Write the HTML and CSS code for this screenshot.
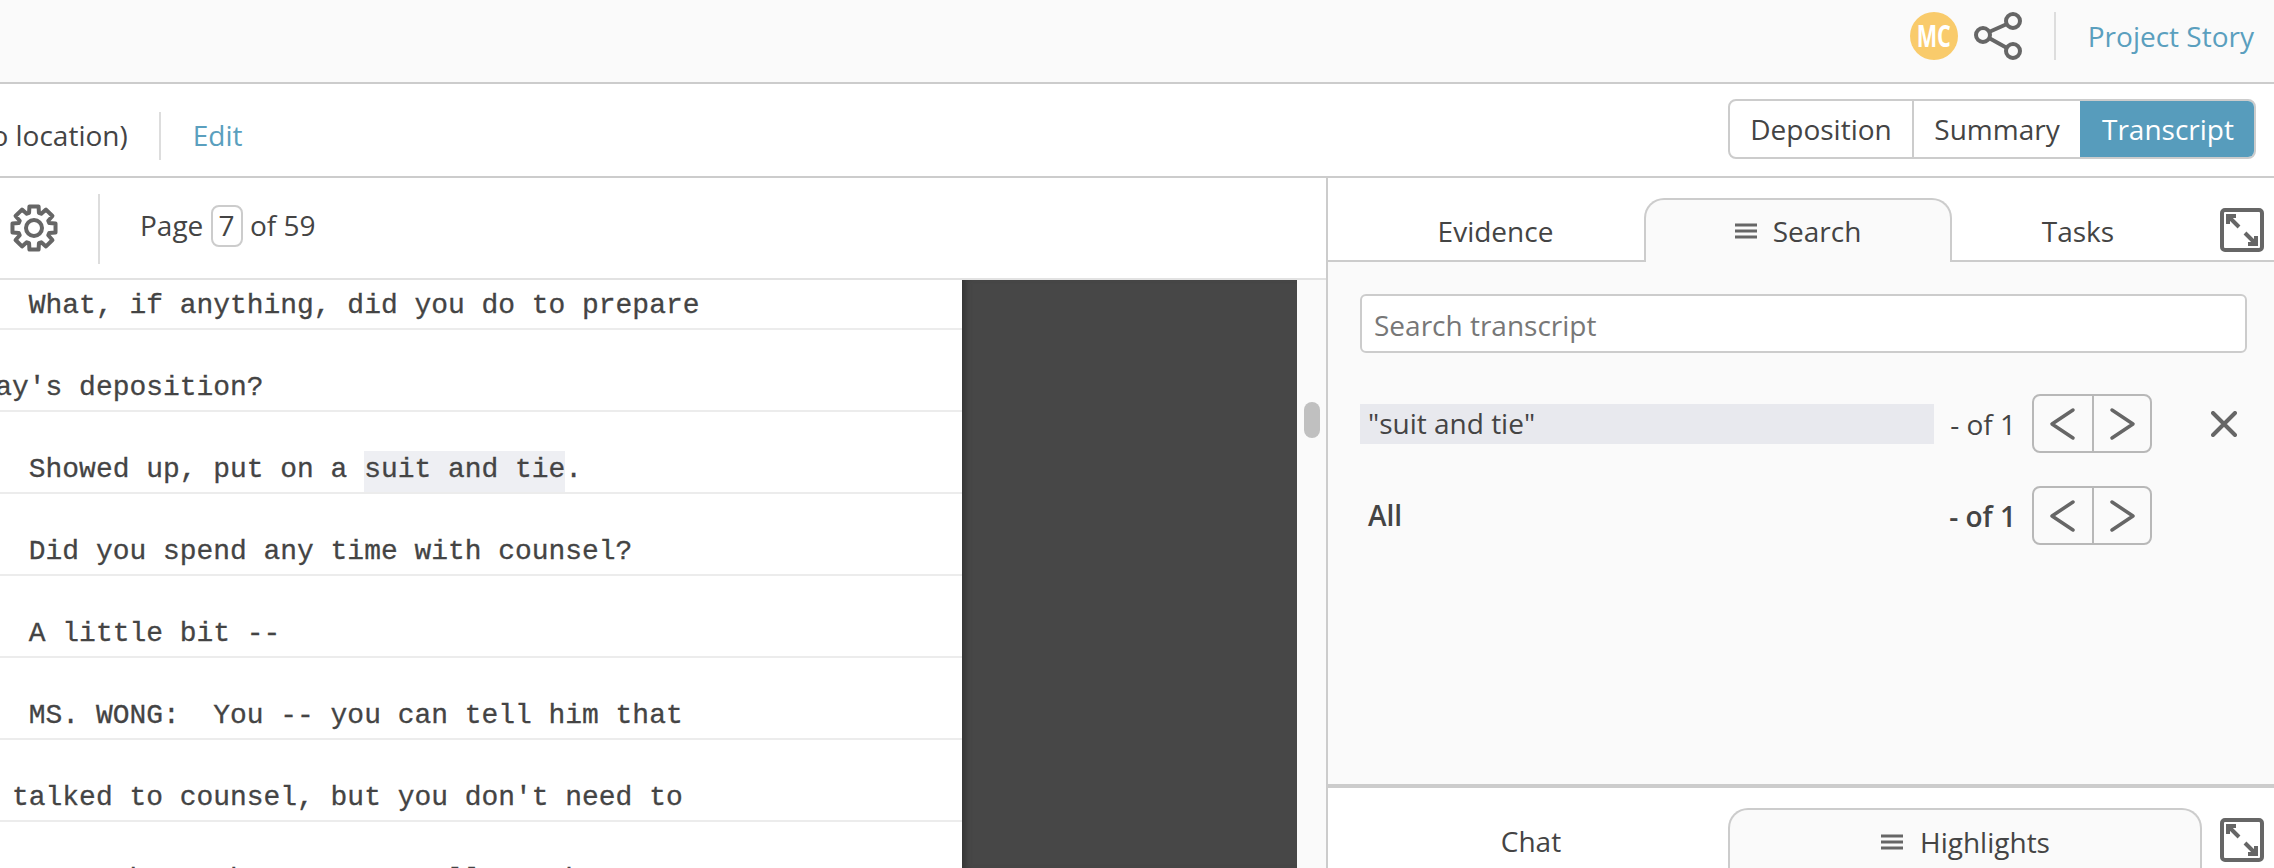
FILE: index.html
```html
<!DOCTYPE html>
<html lang="en">
<head>
<meta charset="utf-8">
<title>Transcript</title>
<link rel="stylesheet" href="styles.css">
</head>
<body>
<div class="app">
  <header class="topbar">
    <span class="avatar"><span class="initials">MC</span></span>
    <svg class="share" viewBox="0 0 48 48" width="48" height="48"><path d="M15 20 33 12M15 26 33 36" fill="none" stroke="#666" stroke-width="4"/><circle cx="9" cy="23" r="7" fill="none" stroke="#666" stroke-width="4"/><circle cx="39" cy="9" r="7" fill="none" stroke="#666" stroke-width="4"/><circle cx="39" cy="39" r="7" fill="none" stroke="#666" stroke-width="4"/></svg>
    <span class="top-divider"></span>
    <a class="link">Project Story</a>
  </header>
  <div class="infobar">
    <span class="location">(no location)</span>
    <span class="info-divider"></span>
    <a class="link">Edit</a>
    <div class="segments">
      <span class="segment">Deposition</span>
      <span class="segment">Summary</span>
      <span class="segment active">Transcript</span>
    </div>
  </div>
  <main class="workspace">
    <section class="doc">
      <div class="doc-toolbar">
        <svg class="gear" viewBox="0 0 48 48" width="48" height="48"><path d="M19.06 8.78 19.43 2.48H28.57L28.94 8.78 31.27 9.74 35.99 5.55 42.45 12.01 38.26 16.73 39.22 19.06 45.52 19.43V28.57L39.22 28.94 38.26 31.27 42.45 35.99 35.99 42.45 31.27 38.26 28.94 39.22 28.57 45.52H19.43L19.06 39.22 16.73 38.26 12.01 42.45 5.55 35.99 9.74 31.27 8.78 28.94 2.48 28.57V19.43L8.78 19.06 9.74 16.73 5.55 12.01 12.01 5.55 16.73 9.74Z" fill="none" stroke="#666" stroke-width="4" stroke-linejoin="round"/><circle cx="24" cy="24" r="8" fill="none" stroke="#666" stroke-width="4"/></svg>
        <span class="tool-divider"></span>
        <span class="pager">Page <span class="page-box">7</span> of 59</span>
      </div>
      <div class="doc-body">
        <div class="sheet">
          <div class="line">     What, if anything, did you do to prepare</div>
          <div class="line">today's deposition?</div>
          <div class="line">     Showed up, put on a <mark class="hit">suit and tie</mark>.</div>
          <div class="line">     Did you spend any time with counsel?</div>
          <div class="line">     A little bit --</div>
          <div class="line">     MS. WONG:  You -- you can tell him that</div>
          <div class="line">    talked to counsel, but you don't need to</div>
          <div class="line">     so we hear about us as well, on how</div>
        </div>
        <div class="viewer"></div>
        <div class="track"><span class="thumb"></span></div>
      </div>
    </section>
    <aside class="side">
      <section class="panel-top">
        <div class="tabs">
          <span class="tab evidence">Evidence</span>
          <span class="tab current search-tab">
            <svg class="menu" viewBox="0 0 22 16" width="22" height="16"><path d="M0 2H22M0 8H22M0 14H22" stroke="#666" stroke-width="3"/></svg>
            Search
          </span>
          <span class="tab tasks">Tasks</span>
          <svg class="expand" viewBox="0 0 44 44" width="44" height="44"><rect x="2" y="2" width="40" height="40" rx="3" fill="none" stroke="#666" stroke-width="4"/><path d="M8 16V8H16M8 8 19 19M36 28V36H28M36 36 25 25" fill="none" stroke="#666" stroke-width="4"/></svg>
        </div>
        <div class="search-body">
          <input class="search-input" type="text" placeholder="Search transcript">
          <div class="result">
            <span class="term term-hit">"suit and tie"</span>
            <span class="count">- of 1</span>
            <span class="stepper">
              <span class="step"><svg viewBox="0 0 28 34" width="28" height="34"><path d="M24 3 3 17 24 31" fill="none" stroke="#666" stroke-width="3.5" stroke-linecap="round" stroke-linejoin="round"/></svg></span>
              <span class="step"><svg viewBox="0 0 28 34" width="28" height="34"><path d="M4 3 25 17 4 31" fill="none" stroke="#666" stroke-width="3.5" stroke-linecap="round" stroke-linejoin="round"/></svg></span>
            </span>
            <svg class="close" viewBox="0 0 26 26" width="26" height="26"><path d="M2 2 24 24M24 2 2 24" stroke="#666" stroke-width="4" stroke-linecap="round"/></svg>
          </div>
          <div class="result result-all">
            <span class="term">All</span>
            <span class="count">- of 1</span>
            <span class="stepper">
              <span class="step"><svg viewBox="0 0 28 34" width="28" height="34"><path d="M24 3 3 17 24 31" fill="none" stroke="#666" stroke-width="3.5" stroke-linecap="round" stroke-linejoin="round"/></svg></span>
              <span class="step"><svg viewBox="0 0 28 34" width="28" height="34"><path d="M4 3 25 17 4 31" fill="none" stroke="#666" stroke-width="3.5" stroke-linecap="round" stroke-linejoin="round"/></svg></span>
            </span>
          </div>
        </div>
      </section>
      <section class="panel-bottom">
        <span class="tab chat">Chat</span>
        <span class="tab current highlights-tab">
          <svg class="menu" viewBox="0 0 22 16" width="24" height="16"><path d="M0 2H22M0 8H22M0 14H22" stroke="#666" stroke-width="3"/></svg>
          Highlights
        </span>
        <svg class="expand expand-low" viewBox="0 0 44 44" width="44" height="44"><rect x="2" y="2" width="40" height="40" rx="3" fill="none" stroke="#666" stroke-width="4"/><path d="M8 16V8H16M8 8 19 19M36 28V36H28M36 36 25 25" fill="none" stroke="#666" stroke-width="4"/></svg>
      </section>
    </aside>
  </main>
</div>
</body>
</html>
```

FILE: styles.css
```css
* { box-sizing: border-box; }
html, body { margin: 0; height: 100%; overflow: hidden; }
body {
  font-family: "Open Sans", "Liberation Sans", sans-serif;
  font-size: 28px;
  color: #444;
  background: #fff;
}
.app { display: flex; flex-direction: column; height: 100vh; }
.link { color: #5a9fbe; }

.topbar {
  flex: none;
  height: 84px;
  display: flex;
  align-items: flex-start;
  justify-content: flex-end;
  padding: 12px 20px 0 0;
  background: #fafafa;
  border-bottom: 2px solid #ccc;
}
.avatar {
  display: flex;
  align-items: center;
  justify-content: center;
  width: 48px;
  height: 48px;
  border-radius: 50%;
  background: #f9cb6b;
  color: #fff;
  font-size: 30px;
  font-weight: 700;
  line-height: 48px;
}
.initials { display: inline-block; transform: scaleX(0.72); }
.share { margin-left: 16px; }
.top-divider { width: 2px; height: 48px; background: #ddd; margin: 0 32px 0 32px; }
.topbar .link { line-height: 48px; }

.infobar {
  flex: none;
  height: 94px;
  display: flex;
  align-items: center;
  border-bottom: 2px solid #ccc;
  padding-right: 18px;
  padding-top: 12px;
}
.location { margin-left: -34px; margin-top: -3px; }
.info-divider { width: 2px; height: 48px; background: #ddd; margin: 0 32px 0 31px; }
.infobar .link { margin-top: -3px; }
.segments {
  margin-left: auto;
  margin-top: -14px;
  display: flex;
  height: 60px;
  width: 528px;
  border: 2px solid #ccc;
  border-radius: 8px;
  overflow: hidden;
}
.segment {
  display: flex;
  align-items: center;
  justify-content: center;
  width: 184px;
  border-right: 2px solid #ccc;
}
.segment:nth-child(2) { width: 166px; border-right: 0; }
.segment.active {
  flex: 1;
  background: #579cbc;
  color: #fff;
  border-right: 0;
  margin: -2px -2px -2px 0;
}

.workspace { flex: 1; display: flex; min-height: 0; }
.doc {
  flex: none;
  width: 1328px;
  display: flex;
  flex-direction: column;
  border-right: 2px solid #ccc;
}
.doc-toolbar {
  flex: none;
  height: 102px;
  display: flex;
  align-items: flex-start;
  border-bottom: 2px solid #e2e2e2;
}
.gear { margin: 26px 0 0 10px; }
.tool-divider { width: 2px; height: 70px; background: #ddd; margin: 16px 40px 0 40px; }
.pager { line-height: 34px; margin-top: 27px; }
.page-box {
  display: inline-block;
  width: 32px;
  height: 42px;
  border: 2px solid #ccc;
  border-radius: 8px;
  line-height: 36px;
  text-align: center;
}

.doc-body { flex: 1; display: flex; min-height: 0; overflow: hidden; }
.sheet { flex: none; width: 962px; overflow: hidden; }
.line {
  height: 82px;
  margin-left: -55px;
  padding-top: 35px;
  font-family: "Liberation Mono", monospace;
  font-size: 27.95px;
  line-height: 45px;
  white-space: pre;
  color: #444;
  -webkit-text-stroke: 0.3px #444;
  border-bottom: 2px solid #ececec;
}
.line:first-child { margin-top: -32px; }
.hit {
  display: inline-block;
  height: 41px;
  line-height: 37px;
  background: #eeeff3;
  color: inherit;
}
.viewer {
  flex: none;
  width: 335px;
  background: #474747;
  box-shadow: inset 7px 0 6px -4px #333;
}
.track {
  flex: 1;
  background: #fafafa;
  padding: 122px 0 0 7px;
}
.thumb {
  display: block;
  width: 16px;
  height: 36px;
  border-radius: 8px;
  background: #c0c0c0;
}

.side { flex: 1; display: flex; flex-direction: column; min-width: 0; }
.panel-top {
  flex: none;
  height: 606px;
  display: flex;
  flex-direction: column;
  background: #fafafa;
}
.tabs {
  flex: none;
  height: 84px;
  display: flex;
  align-items: flex-end;
  background: #fff;
  border-bottom: 2px solid #ccc;
}
.tab {
  display: flex;
  align-items: center;
  justify-content: center;
  gap: 16px;
}
.evidence { width: 316px; height: 62px; padding: 4px 0 0 19px; }
.current {
  background: #fafafa;
  border: 2px solid #ccc;
  border-bottom: 0;
  border-radius: 20px 20px 0 0;
}
.search-tab {
  width: 308px;
  height: 64px;
  margin-bottom: -2px;
}
.tasks { width: 251px; height: 62px; padding: 4px 0 0 1px; }
.expand { flex: none; margin: 0 0 8px 17px; }
.search-body { flex: 1; padding: 32px 27px 0 32px; }
.search-input {
  display: block;
  width: 100%;
  height: 59px;
  padding: 2px 12px 0;
  font: inherit;
  color: #444;
  background: #fff;
  border: 2px solid #ccc;
  border-radius: 6px;
  outline: 0;
}
.search-input::placeholder { color: #777; opacity: 1; }
.result { display: flex; align-items: center; height: 59px; margin-top: 41px; }
.result-all { margin-top: 33px; font-weight: 600; }
.term { flex: none; width: 574px; height: 40px; line-height: 38px; padding-left: 8px; }
.term-hit { background: #e8e9ee; }
.count { flex: none; width: 98px; padding-right: 16px; text-align: right; }
.stepper {
  flex: none;
  display: flex;
  width: 120px;
  height: 59px;
  border: 2px solid #b8b8b8;
  border-radius: 8px;
}
.step { flex: 1; display: flex; align-items: center; justify-content: center; }
.step:first-child { border-right: 2px solid #b8b8b8; flex: 0 0 60px; }
.close { flex: none; margin-left: 59px; }

.panel-bottom {
  flex: 1;
  display: flex;
  align-items: flex-start;
  min-height: 0;
  overflow: hidden;
  background: #fff;
  border-top: 4px solid #ccc;
}
.chat { width: 400px; height: 60px; padding: 6px 0 0 6px; flex: none; margin-top: 20px; }
.highlights-tab {
  flex: none;
  width: 474px;
  height: 90px;
  margin-top: 20px;
  padding-bottom: 25px;
}
.expand-low { margin: 30px 0 0 18px; }
```
